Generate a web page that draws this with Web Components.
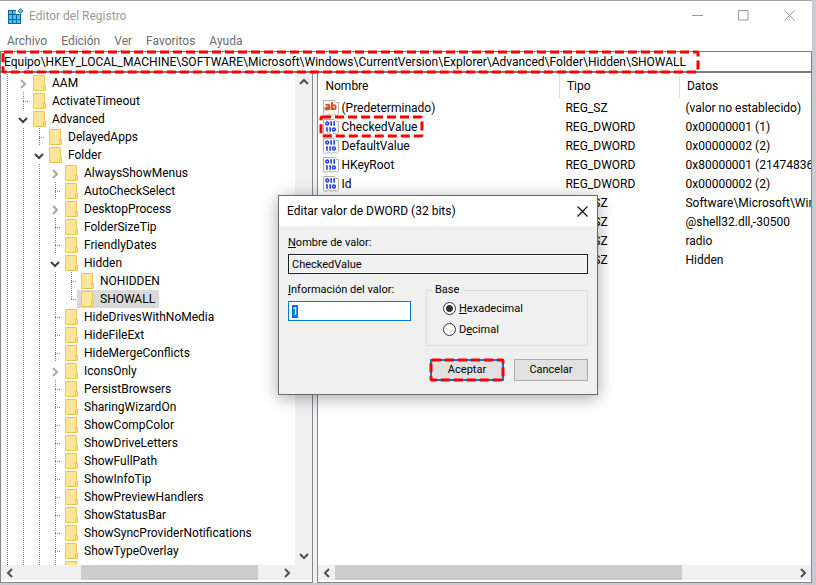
<!DOCTYPE html>
<html lang="es">
<head>
<meta charset="utf-8">
<title>Editor del Registro</title>
<style>
html,body{height:100%}
body{margin:0;background:#c9c9cf;font:12px/18px Roboto,"Liberation Sans",sans-serif;color:#000;overflow:hidden}
</style>
</head>
<body>
<registry-window></registry-window>
<script>
const define = (name, html, setup) => customElements.define(name, class extends HTMLElement {
  connectedCallback() {
    if (this.shadowRoot) return;
    const root = this.attachShadow({ mode: 'open' });
    root.innerHTML = typeof html === 'function' ? html(this) : html;
    if (setup) setup(root, this);
  }
});

/* Red dashed frame drawn over whatever contains it */
define('dash-frame', `
<style>
:host{position:absolute;inset:0;pointer-events:none;z-index:2}
svg{display:block;width:100%;height:100%;overflow:visible}
rect{fill:none;stroke:#f80000;stroke-width:3;stroke-dasharray:9 4;width:calc(100% - 2px);height:calc(100% - 2px)}
</style>
<svg aria-hidden="true"><rect x="1" y="1" rx="1"/></svg>`);

define('title-bar', `
<style>
:host{display:flex;align-items:flex-start;height:31px;padding-left:7px;background:#fff;color:#999}
.name{flex:1;padding-left:5px;line-height:30px}
svg{display:block}
.logo{margin-top:7px}
button{width:46px;height:29px;padding:0;border:0;background:none;display:flex;align-items:center;justify-content:center}
</style>
<svg class="logo" width="17" height="17" viewBox="0 0 17 17" aria-hidden="true">
<path d="M1 2h8v4h5v10H1z" fill="#0a6698"/>
<g fill="#46c4f4"><path d="M2 3h3v3H2zM6 3h3v3H6zM2 7h3v4H2zM6 7h3v4H6zM10 7h3v4h-3zM2 12h3v3H2zM6 12h3v3H6zM10 12h3v3h-3z"/></g>
<path d="M13.500.5L16 3l-2.500 2.500L11 3z" fill="#5ccbf5" stroke="#1779ab"/>
</svg>
<span class="name">Editor del Registro</span>
<button aria-label="Minimizar"><svg width="11" height="11"><path d="M0 5.500h11" stroke="#999"/></svg></button>
<button aria-label="Maximizar"><svg width="11" height="11"><path d="M.5.5h9.500v9.500H.5z" fill="none" stroke="#999"/></svg></button>
<button aria-label="Cerrar"><svg width="11" height="11"><path d="M.5.5l10 10M10.500.5l-10 10" stroke="#999"/></svg></button>`);

define('menu-bar', `
<style>
:host{display:flex;align-items:flex-start;gap:14px;height:19px;padding-left:7px;background:#fff}
button{border:0;padding:0;background:none;font:inherit;color:#6d6d6d}
</style>
<button>Archivo</button><button>Edición</button><button>Ver</button><button>Favoritos</button><button>Ayuda</button>`);

define('address-bar', `
<style>
:host{display:grid;position:relative;height:22px;background:#fff}
input{box-sizing:border-box;width:100%;height:22px;border:1px solid #7c7c7c;border-bottom-width:2px;padding:1px 0 0 3px;font:inherit;color:#000;outline:0;background:#fff}
.mark{position:absolute;left:2px;top:0;width:697px;height:22px}
</style>
<input aria-label="Ruta" value="Equipo\\HKEY_LOCAL_MACHINE\\SOFTWARE\\Microsoft\\Windows\\CurrentVersion\\Explorer\\Advanced\\Folder\\Hidden\\SHOWALL">
<div class="mark"><dash-frame></dash-frame></div>`);

const chevron = { left: 'M7 1L3 5l4 4', right: 'M3 1l4 4-4 4', up: 'M1 7l4-4 4 4', down: 'M1 3l4 4 4-4' };
define('scroll-strip', el => {
  const v = el.hasAttribute('vertical');
  const icon = d => `<svg width="10" height="10" viewBox="0 0 10 10"><path d="${chevron[d]}" fill="none" stroke="#505050" stroke-width="2"/></svg>`;
  return `
<style>
:host{display:flex;flex-direction:${v ? 'column' : 'row'};background:#f0f0f0;${v ? 'width' : 'height'}:${v ? 17 : 15}px;flex:none}
button{border:0;padding:0;background:none;width:17px;height:${v ? 18 : 15}px;display:flex;align-items:center;justify-content:center;flex:none}
.track{flex:1;display:flex}
.thumb{margin-left:var(--start,0);width:var(--size,0);background:#cdcdcd}
</style>
<button aria-label="Atrás">${icon(v ? 'up' : 'left')}</button>
<div class="track">${v ? '' : '<div class="thumb"></div>'}</div>
<button aria-label="Adelante">${icon(v ? 'down' : 'right')}</button>`;
});

/* One line of the key tree. level = depth, state = open | closed | leaf | last */
define('tree-row', el => {
  const level = +el.getAttribute('level');
  const state = el.getAttribute('state') || 'leaf';
  const cells = '<i class="cell"></i>'.repeat(level);
  let own = '';
  if (state === 'open') own = '<button aria-label="Contraer"><svg width="10" height="10"><path d="M1 3l4 4 4-4" fill="none" stroke="#404040" stroke-width="2"/></svg></button>';
  else if (state === 'closed') own = '<button aria-label="Expandir"><svg width="10" height="10"><path d="M3 1l4 4-4 4" fill="none" stroke="#a6a6a6" stroke-width="2"/></svg></button>';
  return `
<style>
:host{display:flex;height:18px;white-space:nowrap}
.cell{flex:none;width:16px;height:18px;background:repeating-linear-gradient(#858585 0 1px,#fff 1px 2px) 6px 0/1px 100% no-repeat}
.own{flex:none;width:12px;height:18px}
.leaf,.last{background:
 repeating-linear-gradient(90deg,#858585 0 1px,#fff 1px 2px) 6px 9px/10px 1px no-repeat,
 repeating-linear-gradient(#858585 0 1px,#fff 1px 2px) 6px 0/1px 100% no-repeat}
.last{background-size:10px 1px,1px 10px}
button{border:0;padding:1px 0 0 1px;width:12px;height:18px;background:none;display:flex;align-items:center}
.label{display:flex;align-items:center;padding:0 4px}
:host([selected]) .label{background:#d9d9d9}
.folder{flex:none;margin-right:6px}
</style>
${cells}<div class="own ${state}">${own}</div>
<div class="label"><svg class="folder" width="13" height="16" viewBox="0 0 13 16" aria-hidden="true">
<path d="M.5.5h11v10h1v5H.5z" fill="#ffe696" stroke="#ecc64f"/><path d="M10.500 15v-4.500h2" fill="none" stroke="#ecc64f"/></svg><slot></slot></div>`;
});

const keys = [
  [1, 'closed', 'AAM'], [1, 'leaf', 'ActivateTimeout'], [1, 'open', 'Advanced'], [2, 'leaf', 'DelayedApps'],
  [2, 'open', 'Folder'], [3, 'closed', 'AlwaysShowMenus'], [3, 'leaf', 'AutoCheckSelect'], [3, 'closed', 'DesktopProcess'],
  [3, 'leaf', 'FolderSizeTip'], [3, 'leaf', 'FriendlyDates'], [3, 'open', 'Hidden'], [4, 'leaf', 'NOHIDDEN'],
  [4, 'last', 'SHOWALL'], [3, 'leaf', 'HideDrivesWithNoMedia'], [3, 'leaf', 'HideFileExt'], [3, 'leaf', 'HideMergeConflicts'],
  [3, 'closed', 'IconsOnly'], [3, 'leaf', 'PersistBrowsers'], [3, 'leaf', 'SharingWizardOn'], [3, 'leaf', 'ShowCompColor'],
  [3, 'leaf', 'ShowDriveLetters'], [3, 'leaf', 'ShowFullPath'], [3, 'leaf', 'ShowInfoTip'], [3, 'leaf', 'ShowPreviewHandlers'],
  [3, 'leaf', 'ShowStatusBar'], [3, 'leaf', 'ShowSyncProviderNotifications'], [3, 'leaf', 'ShowTypeOverlay'], [3, 'leaf', '']
];
define('key-tree', `
<style>
:host{display:flex;flex-direction:column;flex:313 1 0;box-sizing:border-box;border:1px solid #828790;border-top:0;padding-bottom:2px;background:#fff;min-width:0;min-height:0}
.body{flex:1;display:flex;min-height:0}
.rows{flex:1;min-width:0;overflow:hidden;padding-top:1px}
.foot{display:flex;background:#f0f0f0}
scroll-strip:not([vertical]){flex:1;--start:24%;--size:68%}
.corner{width:17px}
</style>
<div class="body"><div class="rows">${keys.map(([l, s, t]) => `<tree-row level="${l}" state="${s}"${t === 'SHOWALL' ? ' selected' : ''}>${t}</tree-row>`).join('')}</div>
<scroll-strip vertical></scroll-strip></div>
<div class="foot"><scroll-strip></scroll-strip><div class="corner"></div></div>`);

define('value-icon', el => `
<style>:host{display:block;width:16px;height:16px;flex:none}svg{display:block}</style>
<svg width="16" height="16" viewBox="0 0 16 16" aria-hidden="true">
<path d="M.5.5h11l1.500 2h2.500v11l-2 2-2-1.500-3 1.500-3-1.500-2.500 1.500-2.500-1z" fill="#fff" stroke="#b0b0b0"/>
${el.getAttribute('kind') === 'sz'
  ? '<g fill="none" stroke="#d9502e" stroke-width="1.900"><path d="M2.500 5.200q4-1.500 4 1V10M6.500 7.200q-4.200-.3-4.200 1.200 0 1.500 2 1 1.700-.3 2.200-1.500"/><path d="M9 2v8"/><ellipse cx="11" cy="7.200" rx="1.700" ry="2.100"/></g>'
  : '<g fill="none" stroke="#2547cf" stroke-width="1.600"><ellipse cx="4.200" cy="4.500" rx="1.400" ry="1.500"/><path d="M8.200 2.200v4.600M11.200 2.200v4.600M7.200 3h1M10.200 3h1M4 8.200v4.600M7.200 8.200v4.600M3 9h1M6.200 9h1"/><ellipse cx="10.900" cy="10.500" rx="1.400" ry="1.500"/></g>'}
</svg>`);

/* Entries without a name lie under the open dialog */
const values = [
  ['(Predeterminado)', 'REG_SZ', '(valor no establecido)'], ['CheckedValue', 'REG_DWORD', '0x00000001 (1)'],
  ['DefaultValue', 'REG_DWORD', '0x00000002 (2)'], ['HKeyRoot', 'REG_DWORD', '0x80000001 (2147483649)'],
  ['Id', 'REG_DWORD', '0x00000002 (2)'], ['', 'REG_SZ', 'Software\\Microsoft\\Windows'],
  ['', 'REG_SZ', '@shell32.dll,-30500'], ['', 'REG_SZ', 'radio'], ['', 'REG_SZ', 'Hidden']
];
define('value-list', `
<style>
:host{display:flex;flex-direction:column;flex:495 1 0;min-width:0;box-sizing:border-box;border:1px solid #828790;border-top:0;padding-bottom:2px;background:#fff}
.body{flex:1;overflow:hidden}
table{width:100%;table-layout:fixed;border-collapse:collapse}
th{height:25px;padding:1px 0 0 7px;font-weight:400;text-align:left;box-sizing:border-box;border-right:1px solid #e0e0e0}
th:last-child{border:0}
.name{width:241px}.type{width:120px}
td{height:19px;padding:0 0 0 6px;white-space:nowrap;overflow:hidden}
td:first-child{padding-left:5px;overflow:visible}
.item{display:inline-flex;position:relative;align-items:center;gap:2px;height:19px;vertical-align:top}
.mark{position:absolute;inset:-1px -6px -1px -3px}
scroll-strip{--start:0;--size:75.500%}
</style>
<div class="body"><table><thead><tr><th class="name">Nombre</th><th class="type">Tipo</th><th>Datos</th></tr></thead><tbody>
${values.map(([n, t, d]) => `<tr><td><span class="item"><value-icon kind="${t === 'REG_SZ' ? 'sz' : 'dword'}"></value-icon>${n}${n === 'CheckedValue' ? '<span class="mark"><dash-frame></dash-frame></span>' : ''}</span></td><td>${t}</td><td>${d}</td></tr>`).join('')}
</tbody></table></div>
<scroll-strip></scroll-strip>`);

define('dword-dialog', `
<style>
:host{position:absolute;left:278px;top:194px;width:320px;box-sizing:border-box;border:1px solid #6a6a6a;background:#f0f0f0;box-shadow:0 3px 16px rgba(0,0,0,.35);font-size:11px;line-height:16px}
header{display:flex;height:30px;align-items:center;justify-content:space-between;padding-left:8px;background:#fff;font-size:12px}
header button{width:30px;height:30px;padding:0;border:0;background:none;display:flex;align-items:center;justify-content:center}
form{padding:9px 9px 13px;margin:0}
label{display:block}
input[type=text]{box-sizing:border-box;display:block;width:100%;height:20px;margin-top:3px;font:inherit;padding:0 3px;border:1px solid #1a1a1a;box-shadow:inset 0 0 0 1px #fff;background:#f0f0f0;outline:0;color:#000}
.row{display:flex;justify-content:space-between;align-items:flex-start;margin-top:8px}
.info{width:123px;white-space:nowrap}
.info input[type=text]{border:1px solid #0078d7;background:#fff}
::selection{background:#0078d7;color:#fff}
fieldset{box-sizing:border-box;width:162px;margin:0;padding:0 0 5px 16px;border:1px solid #dcdcdc}
legend{padding:0 3px;margin-left:-11px}
.radio{display:flex;align-items:center;gap:3px;height:21px}
.radio input{appearance:none;box-sizing:border-box;margin:0;width:13px;height:13px;border:1px solid #333;border-radius:50%;background:#fff}
.radio input:checked{background:radial-gradient(circle,#333 0 3px,#fff 4px)}
.actions{display:flex;justify-content:flex-end;gap:10px;margin-top:13px}
.actions button{position:relative;width:74px;height:22px;padding:0;font:inherit;color:#000;background:#e1e1e1;border:1px solid #adadad}
.actions .ok{border:2px solid #0078d7}
.ok span{position:absolute;inset:-2px}
</style>
<header><span>Editar valor de DWORD (32 bits)</span><button aria-label="Cerrar"><svg width="11" height="11"><path d="M.5.5l10 10M10.500.5l-10 10" stroke="#111" stroke-width="1.200"/></svg></button></header>
<form onsubmit="return false">
<label for="name"><u>N</u>ombre de valor:</label>
<input type="text" id="name" readonly value="CheckedValue">
<div class="row">
<div class="info"><label for="data"><u>I</u>nformación del valor:</label><input type="text" id="data" value="1"></div>
<fieldset><legend>Base</legend>
<label class="radio"><input type="radio" name="base" checked><span><u>H</u>exadecimal</span></label>
<label class="radio"><input type="radio" name="base"><span>D<u>e</u>cimal</span></label>
</fieldset></div>
<div class="actions"><button class="ok">Aceptar<span><dash-frame></dash-frame></span></button><button>Cancelar</button></div>
</form>`, root => {
  const field = root.getElementById('data');
  field.focus();
  field.select();
});

define('registry-window', `
<style>
:host{display:flex;flex-direction:column;position:relative;box-sizing:border-box;height:calc(100vh - 2px);margin-right:4px;border-top:1px solid #a0a0a0;background:#fff}
.panes{flex:1;display:flex;gap:4px;min-height:0;background:#f0f0f0}
</style>
<title-bar></title-bar><menu-bar></menu-bar><address-bar></address-bar>
<div class="panes"><key-tree></key-tree><value-list></value-list></div>
<dword-dialog></dword-dialog>`);
</script>
</body>
</html>
